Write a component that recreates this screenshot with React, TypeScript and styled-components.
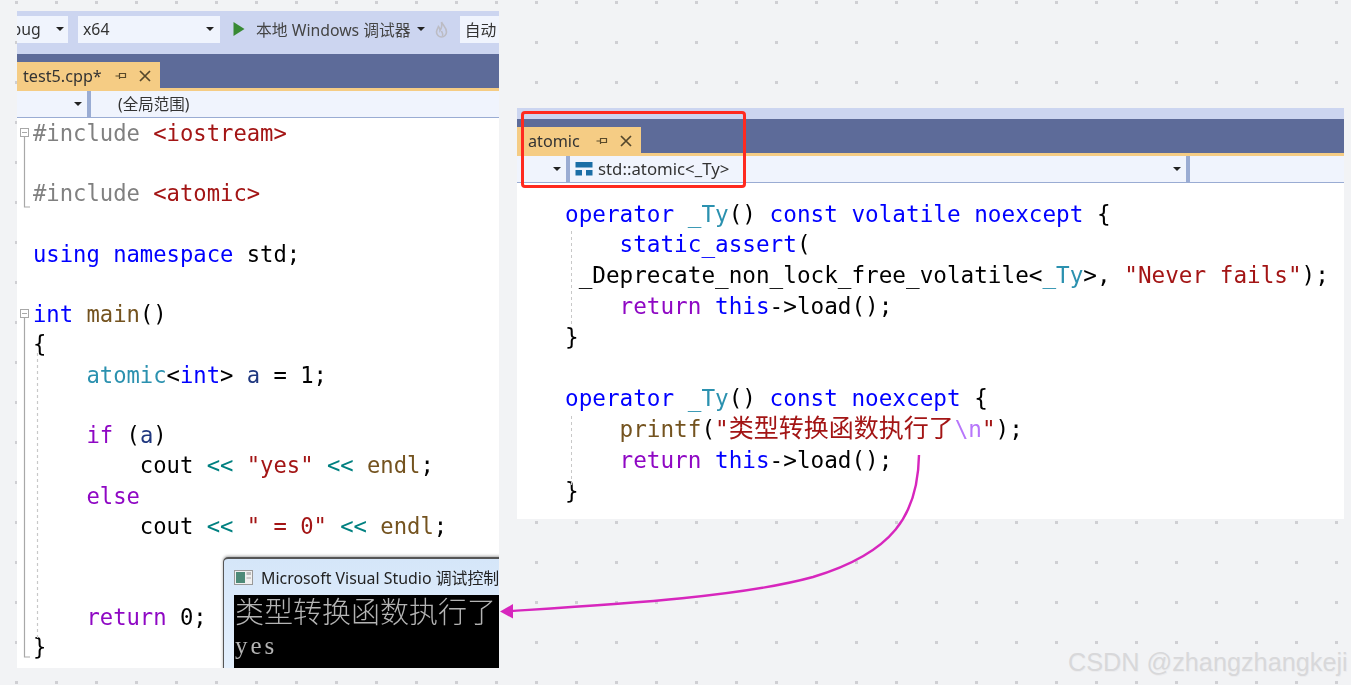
import React from "react";
import styled, { createGlobalStyle } from "styled-components";

const Global = createGlobalStyle`
  html, body { margin: 0; padding: 0; background: #f2f3f5; }
  body { width: 1351px; height: 685px; overflow: hidden; }
`;

const UI = `"Noto Sans", "Noto Sans CJK SC", sans-serif`;
const MONO = `"DejaVu Sans Mono", "Noto Sans CJK SC", monospace`;

const Canvas = styled.div`
  position: relative;
  width: 1351px;
  height: 685px;
  overflow: hidden;
  display: flex;
  align-items: flex-start;
  gap: 18px;
  padding-left: 17px;
  box-sizing: border-box;
  background-color: #f2f3f5;
  &::before {
    content: "";
    position: absolute;
    inset: 0;
    background-image: radial-gradient(circle at 1.5px 1.5px, #cfcfd3 1.5px, transparent 1.7px);
    background-size: 40px 40px;
    background-position: 15px 1px;
  }
`;

const Panel = styled.section<{ $top: number; $w: number; $h: number }>`
  position: relative;
  flex: none;
  margin-top: ${(p) => p.$top}px;
  width: ${(p) => p.$w}px;
  height: ${(p) => p.$h}px;
  overflow: hidden;
  display: flex;
  flex-direction: column;
  background: #fff;
  filter: blur(0.35px);
`;

const Toolbar = styled.div<{ $h: number; $pb?: number }>`
  flex: none;
  box-sizing: border-box;
  height: ${(p) => p.$h}px;
  padding-bottom: ${(p) => p.$pb ?? 0}px;
  background: #ccd5f0;
  display: flex;
  align-items: center;
  font: 15.8px ${UI};
  color: #444;
`;

const Combo = styled.div<{ $w: number; $ml?: number; $pr?: number }>`
  flex: none;
  box-sizing: border-box;
  width: ${(p) => p.$w}px;
  height: 27px;
  margin-left: ${(p) => p.$ml ?? 0}px;
  background: #f0f4fd;
  display: flex;
  align-items: center;
  justify-content: space-between;
  padding: 0 ${(p) => p.$pr ?? 6}px 0 5px;
  font: 15.8px ${UI};
  color: #333;
`;

const Caret = styled.i<{ $ml?: number }>`
  flex: none;
  display: block;
  width: 0;
  height: 0;
  margin-left: ${(p) => p.$ml ?? 0}px;
  border-left: 4px solid transparent;
  border-right: 4px solid transparent;
  border-top: 4px solid #222;
`;

const RunLabel = styled.span`
  margin-left: 11px;
  white-space: nowrap;
`;

const IconBox = styled.span<{ $ml: number }>`
  flex: none;
  display: flex;
  margin-left: ${(p) => p.$ml}px;
`;

const TabWell = styled.div`
  flex: none;
  height: 34px;
  background: #5d6b99;
  display: flex;
  align-items: flex-end;
`;

const Tab = styled.div<{ $w: number; $pad: number }>`
  box-sizing: border-box;
  width: ${(p) => p.$w}px;
  height: 26px;
  padding: 1px 0 0 ${(p) => p.$pad}px;
  background: #f5cc84;
  display: flex;
  align-items: center;
  font: 16.2px ${UI};
  color: #333;
`;

const TabActions = styled.span`
  margin-left: auto;
  margin-right: 9px;
  display: flex;
  align-items: center;
  gap: 12px;
`;

const Accent = styled.div`
  flex: none;
  height: 2.5px;
  background: #f5cc84;
`;

const NavBar = styled.div<{ $size: number }>`
  flex: none;
  box-sizing: border-box;
  height: 27px;
  border-bottom: 1.5px solid #9aacd3;
  background: #f0f4fd;
  display: flex;
  align-items: center;
  font: ${(p) => p.$size}px ${UI};
  color: #333;
`;

const NavSep = styled.span<{ $ml: number }>`
  flex: none;
  align-self: stretch;
  width: 4px;
  margin-left: ${(p) => p.$ml}px;
  background: #9aacd3;
`;

const NavLabel = styled.span<{ $ml: number }>`
  margin-left: ${(p) => p.$ml}px;
  white-space: nowrap;
`;

const Code = styled.div<{ $size: number; $lh: number; $pl: number; $pt: number }>`
  position: relative;
  flex: 1;
  padding: ${(p) => p.$pt}px 0 0 ${(p) => p.$pl}px;
  font-family: ${MONO};
  font-size: ${(p) => p.$size}px;
  line-height: ${(p) => p.$lh}px;
  color: #000;
`;

const Line = styled.div`
  min-height: 1lh;
  height: 1lh;
  white-space: pre;
`;

const COLORS: Record<string, string> = {
  kw: "#0000ff",
  ty: "#2b91af",
  str: "#a31515",
  pre: "#808080",
  fn: "#74531f",
  ctl: "#8f08c4",
  op: "#008080",
  var: "#1f377f",
  esc: "#b776fb",
};

const T = styled.span<{ $k: string }>`
  color: ${(p) => COLORS[p.$k]};
`;

const Cjk = styled.span`
  display: inline-block;
  width: 226px;
  font-size: 25px;
  line-height: 1;
  white-space: nowrap;
  color: #a31515;
`;

const Overlay = styled.svg`
  position: absolute;
  left: 0;
  top: 0;
  pointer-events: none;
`;

const Console = styled.div`
  position: absolute;
  left: 206px;
  top: 546px;
  width: 290px;
  height: 125px;
  box-sizing: border-box;
  padding: 1px 0 0 10px;
  border: 1px solid #555;
  border-top: 2px solid #555;
  border-radius: 5px 0 0 0;
  background: linear-gradient(#d5e6f9, #e6f1fd);
  box-shadow: 0 -1px 3px rgba(0, 0, 0, 0.35);
  display: flex;
  flex-direction: column;
`;

const ConsoleTitle = styled.div`
  flex: none;
  height: 35px;
  display: flex;
  align-items: center;
  gap: 8px;
  font: 15.9px ${UI};
  color: #222;
  white-space: nowrap;
  & > svg {
    flex: none;
  }
`;

const ConsoleBody = styled.div`
  flex: 1;
  background: #000;
  color: #b4b4b4;
  padding-left: 1px;
`;

const ConsoleCjk = styled.div`
  font: 300 29px/31px "Noto Sans CJK SC", sans-serif;
  white-space: nowrap;
`;

const ConsoleText = styled.div`
  font: 25px/40px "Liberation Serif", serif;
  letter-spacing: 3px;
`;

const RedBox = styled.div`
  position: absolute;
  left: 4px;
  top: 3px;
  width: 225px;
  height: 77px;
  box-sizing: border-box;
  border: 3px solid #ff2a1f;
  border-radius: 4px;
`;

const Watermark = styled.div`
  position: absolute;
  left: 1068px;
  top: 647px;
  font: 25.25px/30px "Liberation Sans", sans-serif;
  color: #d8d8da;
  text-shadow: 0.6px 0.6px 0 #ececee;
  white-space: nowrap;
`;

const ArrowLayer = styled.svg`
  position: absolute;
  left: 0;
  top: 0;
  pointer-events: none;
`;

const Pin = () => (
  <svg width="12" height="12" viewBox="0 0 12 12" fill="none" stroke="#5a4a2a" strokeWidth="1.2">
    <path d="M0.5 6H4M4.5 3V9M4.5 3.5H10.5V7.5H4.5" />
  </svg>
);

const Close = () => (
  <svg width="12" height="12" viewBox="0 0 12 12" fill="none" stroke="#54472c" strokeWidth="1.7">
    <path d="M1 1L11 11M11 1L1 11" />
  </svg>
);

const Play = () => (
  <svg width="12" height="16" viewBox="0 0 12 16">
    <path d="M0.5 1L11.5 8L0.5 15Z" fill="#388a34" />
  </svg>
);

const Flame = () => (
  <svg width="13" height="17" viewBox="0 0 13 17" fill="none" stroke="#bcbcc4" strokeWidth="1.6">
    <path d="M6.5 1C7.5 4 11.5 6.5 11.5 11A5 5 0 0 1 1.5 11C1.5 8.5 3 7.5 3.5 5.5C5 7 5 8 5 9.5C6.5 7.5 7 4 6.5 1Z" />
    <path d="M6.5 10C7 12 8.5 12.5 7.5 15" />
  </svg>
);

const ClassIcon = () => (
  <svg width="18" height="14" viewBox="0 0 18 14" fill="#1b6ea6">
    <rect x="0.5" y="0" width="17" height="5.5" />
    <rect x="0.5" y="8" width="6.5" height="5.5" />
    <rect x="11" y="8" width="6.5" height="5.5" />
  </svg>
);

const ConsoleIcon = () => (
  <svg width="19" height="15" viewBox="0 0 19 15">
    <rect x="0.5" y="0.5" width="18" height="14" fill="#f0f0f0" stroke="#999" />
    <rect x="2" y="2" width="9" height="11" fill="#4d8a78" />
    <rect x="12.5" y="2" width="4.5" height="3" fill="#bbb" />
    <rect x="12.5" y="7" width="4.5" height="2" fill="#ccc" />
  </svg>
);

function LeftFolds() {
  return (
    <Overlay width="482" height="552" viewBox="0 0 482 552">
      <g fill="#fff" stroke="#a8a8a8">
        <rect x="3.5" y="10.5" width="8" height="8" />
        <rect x="3.5" y="191.5" width="8" height="8" />
      </g>
      <g stroke="#a8a8a8" fill="none" strokeWidth="1.2">
        <path d="M7.5 19V89H13" />
        <path d="M7.5 200V539H13" />
        <path d="M20.5 235V520" strokeDasharray="3 3" stroke="#c8c8c8" />
      </g>
      <g fill="#a8a8a8">
        <rect x="5" y="14" width="5" height="1" />
        <rect x="5" y="195" width="5" height="1" />
      </g>
    </Overlay>
  );
}

function RightGuides() {
  return (
    <Overlay width="827" height="336" viewBox="0 0 827 336">
      <g stroke="#c8c8c8" fill="none" strokeDasharray="3 3">
        <path d="M54.5 48V142" />
        <path d="M54.5 233V302" />
      </g>
    </Overlay>
  );
}

export default function App() {
  return (
    <Canvas>
      <Global />
      <Panel $top={11} $w={482} $h={657}>
        <Toolbar $h={43} $pb={7}>
          <Combo $w={82} $ml={-31} $pr={4}>
            <span>Debug</span>
            <Caret />
          </Combo>
          <Combo $w={142} $ml={10}>
            <span>x64</span>
            <Caret />
          </Combo>
          <IconBox $ml={13}><Play /></IconBox>
          <RunLabel>本地 Windows 调试器</RunLabel>
          <Caret $ml={6} />
          <IconBox $ml={10}><Flame /></IconBox>
          <Combo $w={60} $ml={12}>
            <span>自动</span>
          </Combo>
        </Toolbar>
        <TabWell>
          <Tab $w={143} $pad={6}>
            test5.cpp*
            <TabActions><Pin /><Close /></TabActions>
          </Tab>
        </TabWell>
        <Accent />
        <NavBar $size={15.5}>
          <Caret $ml={57} />
          <NavSep $ml={5} />
          <NavLabel $ml={27}>(全局范围)</NavLabel>
        </NavBar>
        <Code $size={22.2} $lh={30.26} $pl={16} $pt={0}>
          <Line><T $k="pre">#include </T><T $k="str">&lt;iostream&gt;</T></Line>
          <Line> </Line>
          <Line><T $k="pre">#include </T><T $k="str">&lt;atomic&gt;</T></Line>
          <Line> </Line>
          <Line><T $k="kw">using namespace</T> std;</Line>
          <Line> </Line>
          <Line><T $k="kw">int</T> <T $k="fn">main</T>()</Line>
          <Line>{"{"}</Line>
          <Line>    <T $k="ty">atomic</T>&lt;<T $k="kw">int</T>&gt; <T $k="var">a</T> = 1;</Line>
          <Line> </Line>
          <Line>    <T $k="ctl">if</T> (<T $k="var">a</T>)</Line>
          <Line>        cout <T $k="op">&lt;&lt;</T> <T $k="str">"yes"</T> <T $k="op">&lt;&lt;</T> <T $k="fn">endl</T>;</Line>
          <Line>    <T $k="ctl">else</T></Line>
          <Line>        cout <T $k="op">&lt;&lt;</T> <T $k="str">" = 0"</T> <T $k="op">&lt;&lt;</T> <T $k="fn">endl</T>;</Line>
          <Line> </Line>
          <Line> </Line>
          <Line>    <T $k="ctl">return</T> 0;</Line>
          <Line>{"}"}</Line>
          <LeftFolds />
        </Code>
        <Console>
          <ConsoleTitle>
            <ConsoleIcon />
            Microsoft Visual Studio 调试控制台
          </ConsoleTitle>
          <ConsoleBody>
            <ConsoleCjk>类型转换函数执行了</ConsoleCjk>
            <ConsoleText>yes</ConsoleText>
          </ConsoleBody>
        </Console>
      </Panel>
      <Panel $top={108} $w={827} $h={411}>
        <Toolbar $h={11} />
        <TabWell>
          <Tab $w={124} $pad={11}>
            atomic
            <TabActions><Pin /><Close /></TabActions>
          </Tab>
        </TabWell>
        <Accent />
        <NavBar $size={16.8}>
          <Caret $ml={36} />
          <NavSep $ml={5} />
          <IconBox $ml={5}><ClassIcon /></IconBox>
          <NavLabel $ml={5}>std::atomic&lt;_Ty&gt;</NavLabel>
          <Caret $ml={444} />
          <NavSep $ml={5} />
        </NavBar>
        <Code $size={22.67} $lh={30.8} $pl={48} $pt={16}>
          <Line><T $k="kw">operator</T> <T $k="ty">_Ty</T>() <T $k="kw">const volatile noexcept</T> {"{"}</Line>
          <Line>    <T $k="kw">static_assert</T>(</Line>
          <Line> _Deprecate_non_lock_free_volatile&lt;<T $k="ty">_Ty</T>&gt;, <T $k="str">"Never fails"</T>);</Line>
          <Line>    <T $k="ctl">return</T> <T $k="kw">this</T>-&gt;load();</Line>
          <Line>{"}"}</Line>
          <Line> </Line>
          <Line><T $k="kw">operator</T> <T $k="ty">_Ty</T>() <T $k="kw">const noexcept</T> {"{"}</Line>
          <Line>    <T $k="fn">printf</T>(<T $k="str">"</T><Cjk>类型转换函数执行了</Cjk><T $k="esc">\n</T><T $k="str">"</T>);</Line>
          <Line>    <T $k="ctl">return</T> <T $k="kw">this</T>-&gt;load();</Line>
          <Line>{"}"}</Line>
          <RightGuides />
        </Code>
        <RedBox />
      </Panel>
      <ArrowLayer width="1351" height="685" viewBox="0 0 1351 685">
        <path
          d="M919 455C918 515 893 553 813 577C740 597 620 604 511 611"
          fill="none"
          stroke="#d726bd"
          strokeWidth="2.4"
        />
        <path d="M500 611.5L513 604V618.5Z" fill="#d726bd" />
      </ArrowLayer>
      <Watermark>CSDN @zhangzhangkeji</Watermark>
    </Canvas>
  );
}
